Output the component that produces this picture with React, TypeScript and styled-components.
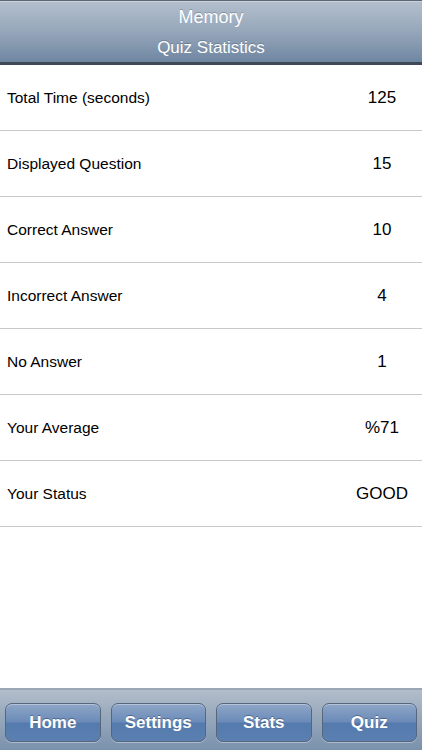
import React from "react";
import styled, { createGlobalStyle } from "styled-components";

const Global = createGlobalStyle`
  html, body { margin: 0; padding: 0; background: #ffffff; }
  body { font-family: "Liberation Sans", Arial, Helvetica, sans-serif; }
  * { box-sizing: border-box; }
`;

const Screen = styled.div`
  width: 422px;
  height: 750px;
  display: flex;
  flex-direction: column;
  background: #ffffff;
  overflow: hidden;
`;

const Header = styled.header`
  height: 65px;
  flex: none;
  display: flex;
  flex-direction: column;
  align-items: center;
  border-top: 1px solid #5d6672;
  box-shadow: inset 0 1px 0 #c9d3de;
  background: linear-gradient(#b3bfcd 0%, #96a7ba 50%, #6f86a2 100%);
  border-bottom: 3px solid #3e4856;
`;

const HeaderLine = styled.div<{ $size: number; $top: number }>`
  height: 30px;
  display: flex;
  align-items: center;
  justify-content: center;
  color: #ffffff;
  font-size: ${(p) => p.$size}px;
  text-shadow: 0 -1px 0 rgba(60, 75, 95, 0.35);
  padding-top: ${(p) => p.$top}px;
`;

const List = styled.div`
  display: flex;
  flex-direction: column;
`;

const Row = styled.div`
  height: 66px;
  display: flex;
  align-items: center;
  border-bottom: 1px solid #c8c8c8;
`;

const Label = styled.span`
  flex: 1;
  padding-left: 7px;
  font-size: 15.5px;
  color: #000000;
`;

const Value = styled.span`
  width: 80px;
  text-align: center;
  font-size: 17px;
  color: #000000;
`;

const Spacer = styled.div`
  flex: 1;
`;

const Toolbar = styled.footer`
  height: 62px;
  flex: none;
  display: grid;
  grid-template-columns: repeat(4, 1fr);
  gap: 10px;
  padding: 13px 5px 8px 5px;
  border-top: 2px solid #9aa6b4;
  background: linear-gradient(#b2bdcb 0%, #97a8bb 45%, #7a91ad 100%);
`;

const Button = styled.button`
  height: 39px;
  border-radius: 7px;
  border: 1px solid #56677d;
  box-shadow: 0 1px 0 rgba(255, 255, 255, 0.35), inset 0 1px 0 rgba(255, 255, 255, 0.35);
  background: linear-gradient(#8ea6c7 0%, #6b8bb8 48%, #557aad 52%, #5a7fb0 100%);
  color: #ffffff;
  font-family: "Liberation Sans", Arial, sans-serif;
  font-weight: bold;
  font-size: 17px;
  text-shadow: 0 -1px 0 rgba(40, 60, 90, 0.5);
  padding: 0;
  display: flex;
  align-items: center;
  justify-content: center;
`;

const rows: [string, string][] = [
  ["Total Time (seconds)", "125"],
  ["Displayed Question", "15"],
  ["Correct Answer", "10"],
  ["Incorrect Answer", "4"],
  ["No Answer", "1"],
  ["Your Average", "%71"],
  ["Your Status", "GOOD"],
];

export default function App() {
  return (
    <>
      <Global />
      <Screen>
        <Header>
          <HeaderLine $size={18} $top={2}>Memory</HeaderLine>
          <HeaderLine $size={17} $top={3}>Quiz Statistics</HeaderLine>
        </Header>
        <List>
          {rows.map(([l, v]) => (
            <Row key={l}>
              <Label>{l}</Label>
              <Value>{v}</Value>
            </Row>
          ))}
        </List>
        <Spacer />
        <Toolbar>
          <Button>Home</Button>
          <Button>Settings</Button>
          <Button>Stats</Button>
          <Button>Quiz</Button>
        </Toolbar>
      </Screen>
    </>
  );
}
